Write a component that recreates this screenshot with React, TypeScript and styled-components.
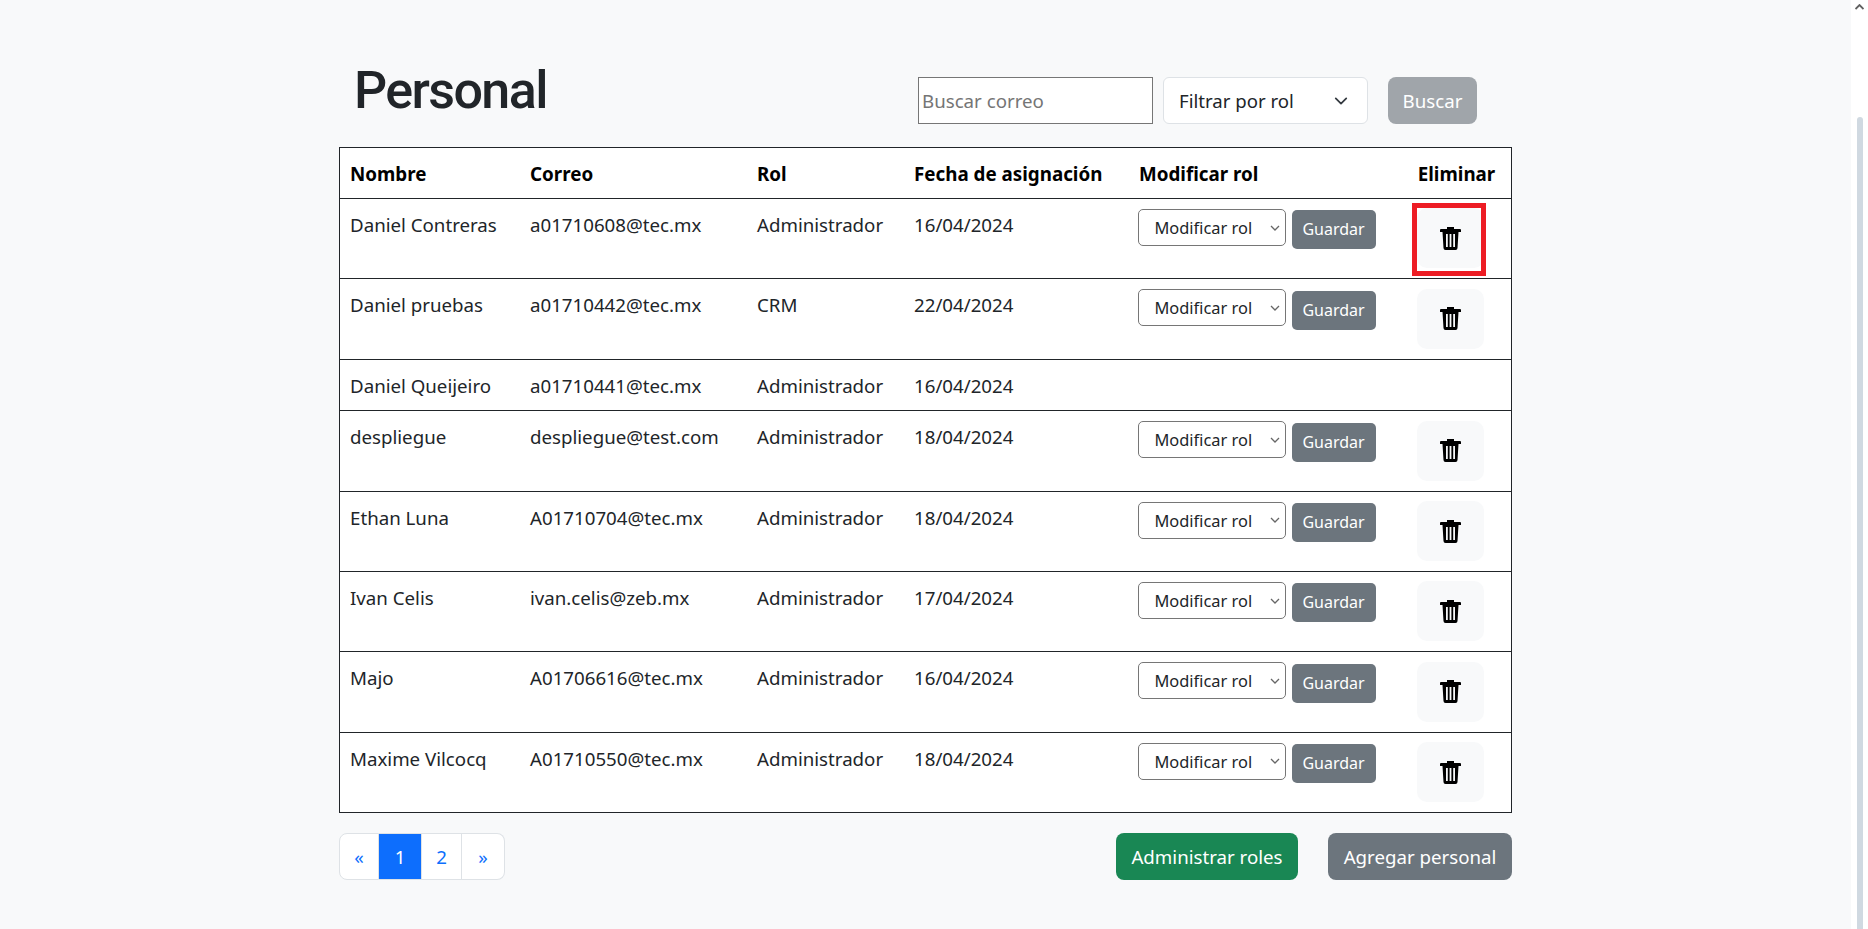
import React from 'react';
import styled, { createGlobalStyle } from 'styled-components';

const GlobalStyle = createGlobalStyle`
  html, body {
    margin: 0;
    padding: 0;
    height: 100%;
    overflow: hidden;
    background: #f8f9fa;
    font-family: 'Noto Sans', 'Open Sans', sans-serif;
    color: #212529;
  }
`;

const Shell = styled.div`
  display: flex;
  height: 929px;
`;

const Main = styled.main`
  flex: 1;
  display: flex;
  justify-content: center;
`;

const Scrollbar = styled.aside`
  width: 17px;
  background: #fff;
  display: flex;
  flex-direction: column;
  align-items: center;
`;

const ScrollArrow = styled.svg`
  width: 9px;
  height: 6px;
  margin-top: 4px;
  margin-bottom: 107px;
`;

const ScrollThumb = styled.div`
  flex: 1;
  width: 6px;
  background: #d0d9e1;
  border-radius: 3px 3px 0 0;
`;

const Container = styled.div`
  width: 1173px;
  padding-top: 57px;
`;

const Header = styled.header`
  display: flex;
  align-items: flex-start;
  height: 90px;
`;

const Title = styled.h1`
  margin: 2px 0 0 15px;
  font-family: Roboto, sans-serif;
  font-size: 52px;
  line-height: 64px;
  font-weight: 500;
  letter-spacing: -1.6px;
  flex: 1;
`;

const SearchForm = styled.form`
  display: flex;
  margin: 20px 35px 0 0;
`;

const SearchInput = styled.input`
  box-sizing: border-box;
  width: 235px;
  height: 47px;
  padding: 0 3px;
  border: 1.5px solid #767676;
  background: #fff;
  font: inherit;
  font-size: 18.7px;
  &::placeholder {
    color: #757575;
  }
`;

const RoleFilter = styled.select`
  box-sizing: border-box;
  width: 205px;
  height: 47px;
  margin: 0 20px 0 10px;
  padding: 0 15px;
  border: 1px solid #dee2e6;
  border-radius: 6px;
  appearance: none;
  background: #fff url("data:image/svg+xml,%3csvg xmlns='http://www.w3.org/2000/svg' viewBox='0 0 16 16'%3e%3cpath fill='none' stroke='%23343a40' stroke-linecap='round' stroke-linejoin='round' stroke-width='2' d='m2 5 6 6 6-6'/%3e%3c/svg%3e") no-repeat right 19px center / 14px 14px;
  color: #212529;
  font: inherit;
  font-size: 18.6px;
`;

const Button = styled.button<{ $tone: 'green' | 'gray' | 'muted'; $width: number }>`
  box-sizing: border-box;
  width: ${p => p.$width}px;
  height: 47px;
  padding: 0;
  border: none;
  border-radius: 8px;
  color: #fff;
  font: inherit;
  font-size: 18.7px;
  background: ${p =>
    p.$tone === 'green' ? '#198754' : p.$tone === 'muted' ? '#a0a5aa' : '#6c757d'};
`;

const Table = styled.div`
  box-sizing: border-box;
  width: 1173px;
  background: #fff;
  border: 1px solid #212529;
  font-size: 18.7px;
  line-height: 27px;
  color: #212529;
`;

const columns = '180px 227px 157px 225px 273px 1fr';

const HeadRow = styled.div`
  display: grid;
  grid-template-columns: ${columns};
  height: 50px;
`;

const HeadCell = styled.div<{ $center?: boolean }>`
  padding: 13px 10px 0;
  font-size: 18.8px;
  font-weight: 700;
  color: #000;
  text-align: ${p => (p.$center ? 'center' : 'left')};
`;

const Row = styled.div<{ $height: number }>`
  box-sizing: border-box;
  display: grid;
  grid-template-columns: ${columns};
  height: ${p => p.$height}px;
  border-top: 1px solid #212529;
`;

const Cell = styled.div`
  padding: 12px 10px 0;
  white-space: nowrap;
`;

const RoleForm = styled.form`
  display: flex;
  align-items: flex-start;
  gap: 6px;
  padding: 10px 0 0 8.5px;
`;

const RoleSelect = styled.select`
  box-sizing: border-box;
  width: 148px;
  height: 37px;
  padding: 0 0 0 16px;
  border: 1px solid #767676;
  border-radius: 5px;
  appearance: none;
  background: #fff url("data:image/svg+xml,%3csvg xmlns='http://www.w3.org/2000/svg' viewBox='0 0 10 6'%3e%3cpath fill='none' stroke='%23666' stroke-width='1.3' d='m1 1 4 4 4-4'/%3e%3c/svg%3e") no-repeat right 5px center / 10px 6px;
  color: #212529;
  font: inherit;
  font-size: 16.4px;
`;

const SaveButton = styled.button`
  box-sizing: border-box;
  width: 84px;
  height: 39px;
  margin-top: 1.4px;
  border: none;
  border-radius: 5px;
  background: #6c757d;
  color: #fff;
  font: inherit;
  font-size: 16px;
`;

const DeleteCell = styled.div`
  padding: 9.4px 0 0 15px;
`;

const DeleteButton = styled.button<{ $marked?: boolean }>`
  position: relative;
  display: flex;
  align-items: center;
  justify-content: center;
  width: 67px;
  height: 60px;
  padding: 0;
  border: none;
  border-radius: 10px;
  background: #f8f9fa;
  ${p =>
    p.$marked &&
    `
    &::after {
      content: '';
      position: absolute;
      left: -5px;
      top: -5px;
      width: 74px;
      height: 73px;
      box-sizing: border-box;
      border: 5px solid #ed1c24;
    }
  `}
`;

const Footer = styled.footer`
  display: flex;
  align-items: center;
  margin-top: 19.8px;
  gap: 30px;
`;

const Pagination = styled.nav`
  display: flex;
  height: 47px;
  margin-right: auto;
`;

const PageLink = styled.a<{ $active?: boolean; $width: number }>`
  box-sizing: border-box;
  display: flex;
  align-items: center;
  justify-content: center;
  width: ${p => p.$width}px;
  border: 1px solid #dee2e6;
  border-left: none;
  background: ${p => (p.$active ? '#0d6efd' : '#fff')};
  color: ${p => (p.$active ? '#fff' : '#0d6efd')};
  font-size: 18.7px;
  &:first-child {
    border-left: 1px solid #dee2e6;
    border-radius: 8px 0 0 8px;
  }
  &:last-child {
    border-radius: 0 8px 8px 0;
  }
`;

const TrashIcon = () => (
  <svg width="21" height="23" viewBox="0 0 21 23">
    <path d="M7 0h7v2h6a1 1 0 0 1 1 1v2H0V3a1 1 0 0 1 1-1h6z" fill="#000" />
    <path d="M2.5 5h16l-1 16a2 2 0 0 1-2 2h-10a2 2 0 0 1-2-2z" fill="#000" />
    <path d="M6 7h1.8v13H6zM9.6 7h1.8v13H9.6zM13.2 7H15v13h-1.8z" fill="#f8f9fa" />
  </svg>
);

type Person = {
  name: string;
  email: string;
  role: string;
  date: string;
  editable?: boolean;
  marked?: boolean;
};

const people: Person[] = [
  { name: 'Daniel Contreras', email: 'a01710608@tec.mx', role: 'Administrador', date: '16/04/2024', editable: true, marked: true },
  { name: 'Daniel pruebas', email: 'a01710442@tec.mx', role: 'CRM', date: '22/04/2024', editable: true },
  { name: 'Daniel Queijeiro', email: 'a01710441@tec.mx', role: 'Administrador', date: '16/04/2024' },
  { name: 'despliegue', email: 'despliegue@test.com', role: 'Administrador', date: '18/04/2024', editable: true },
  { name: 'Ethan Luna', email: 'A01710704@tec.mx', role: 'Administrador', date: '18/04/2024', editable: true },
  { name: 'Ivan Celis', email: 'ivan.celis@zeb.mx', role: 'Administrador', date: '17/04/2024', editable: true },
  { name: 'Majo', email: 'A01706616@tec.mx', role: 'Administrador', date: '16/04/2024', editable: true },
  { name: 'Maxime Vilcocq', email: 'A01710550@tec.mx', role: 'Administrador', date: '18/04/2024', editable: true },
];

export default function App() {
  return (
    <Shell>
      <GlobalStyle />
      <Main>
        <Container>
          <Header>
            <Title>Personal</Title>
            <SearchForm>
              <SearchInput placeholder="Buscar correo" />
              <RoleFilter defaultValue="">
                <option value="">Filtrar por rol</option>
              </RoleFilter>
              <Button $tone="muted" $width={89} type="button">Buscar</Button>
            </SearchForm>
          </Header>
          <Table>
            <HeadRow>
              <HeadCell>Nombre</HeadCell>
              <HeadCell>Correo</HeadCell>
              <HeadCell>Rol</HeadCell>
              <HeadCell>Fecha de asignación</HeadCell>
              <HeadCell>Modificar rol</HeadCell>
              <HeadCell $center>Eliminar</HeadCell>
            </HeadRow>
            {people.map(person => (
              <Row key={person.email} $height={person.editable ? 80.4 : 51.5}>
                <Cell>{person.name}</Cell>
                <Cell>{person.email}</Cell>
                <Cell>{person.role}</Cell>
                <Cell>{person.date}</Cell>
                {person.editable && (
                  <>
                    <RoleForm>
                      <RoleSelect defaultValue="">
                        <option value="">Modificar rol</option>
                      </RoleSelect>
                      <SaveButton type="button">Guardar</SaveButton>
                    </RoleForm>
                    <DeleteCell>
                      <DeleteButton $marked={person.marked} type="button">
                        <TrashIcon />
                      </DeleteButton>
                    </DeleteCell>
                  </>
                )}
              </Row>
            ))}
          </Table>
          <Footer>
            <Pagination>
              <PageLink $width={40}>«</PageLink>
              <PageLink $width={43} $active>1</PageLink>
              <PageLink $width={40}>2</PageLink>
              <PageLink $width={43}>»</PageLink>
            </Pagination>
            <Button $tone="green" $width={182} type="button">Administrar roles</Button>
            <Button $tone="gray" $width={184} type="button">Agregar personal</Button>
          </Footer>
        </Container>
      </Main>
      <Scrollbar>
        <ScrollArrow viewBox="0 0 9 6">
          <path d="M0.5 5 4.5 1l4 4" fill="none" stroke="#606060" strokeWidth="1.8" />
        </ScrollArrow>
        <ScrollThumb />
      </Scrollbar>
    </Shell>
  );
}
